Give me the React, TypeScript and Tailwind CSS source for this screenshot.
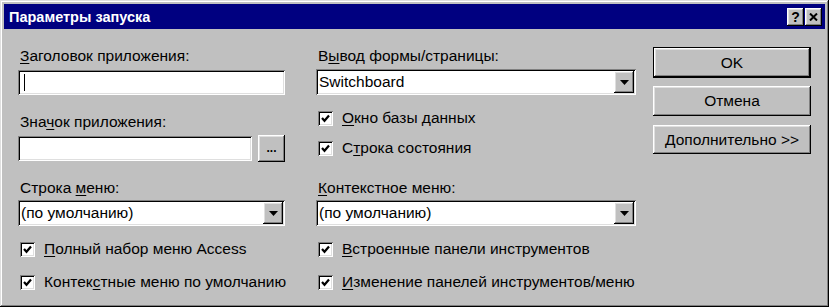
import React from "react";

const raised =
  "shadow-[inset_-1px_-1px_#000,inset_1px_1px_#fff,inset_-2px_-2px_#808080,inset_2px_2px_#dfdfdf]";
const sunken =
  "shadow-[inset_1px_1px_#808080,inset_-1px_-1px_#fff,inset_2px_2px_#000,inset_-2px_-2px_#dfdfdf]";

function U({ children }: { children: React.ReactNode }) {
  return <span className="underline underline-offset-2 decoration-1">{children}</span>;
}

function Label({ children, className = "" }: { children: React.ReactNode; className?: string }) {
  return <div className={"h-4 leading-4 whitespace-nowrap " + className}>{children}</div>;
}

function TextBox({ className = "", children }: { className?: string; children?: React.ReactNode }) {
  return <div className={"h-[25px] bg-white " + sunken + " " + className}>{children}</div>;
}

function Arrow() {
  return (
    <svg width="9" height="5" viewBox="0 0 9 5">
      <path d="M0 0H9L4.5 5Z" fill="#000" />
    </svg>
  );
}

function Combo({ value, className = "" }: { value: string; className?: string }) {
  return (
    <div className={"h-[26px] bg-white flex items-center pl-[3px] pr-[2px] " + sunken + " " + className}>
      <span className="flex-1 leading-4 whitespace-nowrap">{value}</span>
      <div className={"w-[20px] h-[22px] bg-[#c0c0c0] flex items-center justify-center " + raised}>
        <Arrow />
      </div>
    </div>
  );
}

function Check({ children, className = "" }: { children: React.ReactNode; className?: string }) {
  return (
    <div className={"h-4 flex items-center whitespace-nowrap " + className}>
      <div className={"w-[15px] h-[15px] shrink-0 bg-white flex items-center justify-center " + sunken}>
        <svg width="9" height="9" viewBox="0 0 9 9">
          <path d="M1 4L3.5 6.8L8 1.5" stroke="#000" strokeWidth="2.2" fill="none" />
        </svg>
      </div>
      <span className="ml-[9px] leading-4">{children}</span>
    </div>
  );
}

function Button({ children, className = "", def = false }: { children: React.ReactNode; className?: string; def?: boolean }) {
  return (
    <div
      className={
        "flex items-center justify-center bg-[#c0c0c0] " +
        (def ? "border border-black " : "") +
        className
      }
    >
      <div className={"w-full h-full flex items-center justify-center " + raised}>{children}</div>
    </div>
  );
}

export default function App() {
  return (
    <div
      className="w-[829px] h-[307px] bg-[#c0c0c0] text-black text-[15.5px] shadow-[inset_-1px_-1px_#000,inset_1px_1px_#dfdfdf,inset_-2px_-2px_#808080,inset_2px_2px_#fff] p-[4px] flex flex-col"
      style={{ fontFamily: '"Liberation Sans", Arial, sans-serif' }}
    >
      {/* Title bar */}
      <div className="h-[25px] bg-[#000080] flex items-center pl-[5px] pr-[3px]">
        <span className="flex-1 text-white font-bold text-[14.5px] leading-4">Параметры запуска</span>
        <div className={"w-[17px] h-[18px] bg-[#c0c0c0] flex items-center justify-center font-bold text-[14px] leading-none " + raised}>
          ?
        </div>
        <div className={"ml-[1px] w-[17px] h-[18px] bg-[#c0c0c0] flex items-center justify-center " + raised}>
          <svg width="9" height="8" viewBox="0 0 9 8">
            <path d="M1 0.5L8 7.5M8 0.5L1 7.5" stroke="#000" strokeWidth="2" />
          </svg>
        </div>
      </div>

      {/* Body */}
      <div className="flex-1 flex pl-[14px] pt-[19px]">
        {/* Left column */}
        <div className="w-[267px] flex flex-col">
          <Label className="pl-[2px]">
            <U>З</U>аголовок приложения:
          </Label>
          <TextBox className="mt-[6px] flex items-center pl-[6px]">
            <div className="w-[1px] h-[17px] bg-black" />
          </TextBox>
          <Label className="mt-[19px] pl-[2px]">
            Зна<U>ч</U>ок приложения:
          </Label>
          <div className="mt-[5px] flex items-center">
            <TextBox className="w-[234px]" />
            <div className={"ml-[6px] w-[27px] h-[27px] bg-[#c0c0c0] flex items-center justify-center font-bold text-[12px] leading-none pb-[2px] " + raised}>
              ...
            </div>
          </div>
          <Label className="mt-[18px] pl-[2px]">
            Строка <U>м</U>еню:
          </Label>
          <Combo className="mt-[4px]" value="(по умолчанию)" />
          <Check className="mt-[15px] pl-[2px]">
            <U>П</U>олный набор меню Access
          </Check>
          <Check className="mt-[17px] pl-[2px]">
            Контек<U>с</U>тные меню по умолчанию
          </Check>
        </div>

        {/* Middle column */}
        <div className="ml-[31px] w-[320px] flex flex-col">
          <Label className="pl-[2px]">
            В<U>ы</U>вод формы/страницы:
          </Label>
          <Combo className="mt-[5px]" value="Switchboard" />
          <Check className="mt-[15px] pl-[2px]">
            <U>О</U>кно базы данных
          </Check>
          <Check className="mt-[14px] pl-[2px]">
            С<U>т</U>рока состояния
          </Check>
          <Label className="mt-[24px] pl-[2px]">
            <U>К</U>онтекстное меню:
          </Label>
          <Combo className="mt-[4px]" value="(по умолчанию)" />
          <Check className="mt-[15px] pl-[2px]">
            <U>В</U>строенные панели инструментов
          </Check>
          <Check className="mt-[17px] pl-[2px]">
            <U>И</U>зменение панелей инструментов/меню
          </Check>
        </div>

        {/* Right column */}
        <div className="ml-[17px] w-[158px] flex flex-col -mt-[1px]">
          <Button def className="h-[31px]">OK</Button>
          <Button className="mt-[8px] h-[30px]">Отмена</Button>
          <Button className="mt-[9px] h-[29px]">
            <span className="whitespace-nowrap">
              <U>Д</U>ополнительно &gt;&gt;
            </span>
          </Button>
        </div>
      </div>
    </div>
  );
}
